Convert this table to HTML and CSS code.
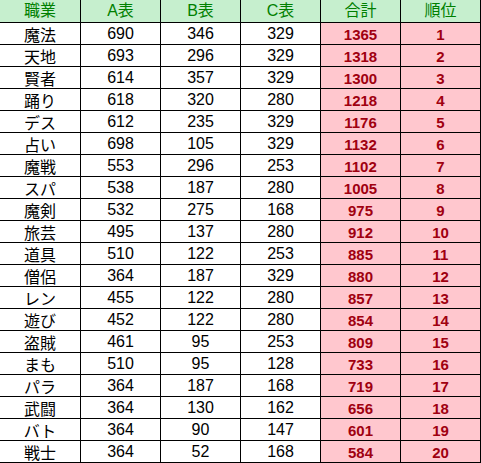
FILE: index.html
```html
<!DOCTYPE html>
<html lang="ja">
<head>
<meta charset="utf-8">
<title>表</title>
<link rel="stylesheet" href="styles.css">
</head>
<body>
<div class="sheet">
  <div class="c h">職業</div><div class="c h">A表</div><div class="c h">B表</div><div class="c h">C表</div><div class="c h">合計</div><div class="c h">順位</div>
  <div class="c jp">魔法</div><div class="c">690</div><div class="c">346</div><div class="c">329</div><div class="c hi">1365</div><div class="c hi">1</div>
  <div class="c jp">天地</div><div class="c">693</div><div class="c">296</div><div class="c">329</div><div class="c hi">1318</div><div class="c hi">2</div>
  <div class="c jp">賢者</div><div class="c">614</div><div class="c">357</div><div class="c">329</div><div class="c hi">1300</div><div class="c hi">3</div>
  <div class="c jp">踊り</div><div class="c">618</div><div class="c">320</div><div class="c">280</div><div class="c hi">1218</div><div class="c hi">4</div>
  <div class="c jp">デス</div><div class="c">612</div><div class="c">235</div><div class="c">329</div><div class="c hi">1176</div><div class="c hi">5</div>
  <div class="c jp">占い</div><div class="c">698</div><div class="c">105</div><div class="c">329</div><div class="c hi">1132</div><div class="c hi">6</div>
  <div class="c jp">魔戦</div><div class="c">553</div><div class="c">296</div><div class="c">253</div><div class="c hi">1102</div><div class="c hi">7</div>
  <div class="c jp">スパ</div><div class="c">538</div><div class="c">187</div><div class="c">280</div><div class="c hi">1005</div><div class="c hi">8</div>
  <div class="c jp">魔剣</div><div class="c">532</div><div class="c">275</div><div class="c">168</div><div class="c hi">975</div><div class="c hi">9</div>
  <div class="c jp">旅芸</div><div class="c">495</div><div class="c">137</div><div class="c">280</div><div class="c hi">912</div><div class="c hi">10</div>
  <div class="c jp">道具</div><div class="c">510</div><div class="c">122</div><div class="c">253</div><div class="c hi">885</div><div class="c hi">11</div>
  <div class="c jp">僧侶</div><div class="c">364</div><div class="c">187</div><div class="c">329</div><div class="c hi">880</div><div class="c hi">12</div>
  <div class="c jp">レン</div><div class="c">455</div><div class="c">122</div><div class="c">280</div><div class="c hi">857</div><div class="c hi">13</div>
  <div class="c jp">遊び</div><div class="c">452</div><div class="c">122</div><div class="c">280</div><div class="c hi">854</div><div class="c hi">14</div>
  <div class="c jp">盗賊</div><div class="c">461</div><div class="c">95</div><div class="c">253</div><div class="c hi">809</div><div class="c hi">15</div>
  <div class="c jp">まも</div><div class="c">510</div><div class="c">95</div><div class="c">128</div><div class="c hi">733</div><div class="c hi">16</div>
  <div class="c jp">パラ</div><div class="c">364</div><div class="c">187</div><div class="c">168</div><div class="c hi">719</div><div class="c hi">17</div>
  <div class="c jp">武闘</div><div class="c">364</div><div class="c">130</div><div class="c">162</div><div class="c hi">656</div><div class="c hi">18</div>
  <div class="c jp">バト</div><div class="c">364</div><div class="c">90</div><div class="c">147</div><div class="c hi">601</div><div class="c hi">19</div>
  <div class="c jp">戦士</div><div class="c">364</div><div class="c">52</div><div class="c">168</div><div class="c hi">584</div><div class="c hi">20</div>
</div>
</body>
</html>
```

FILE: styles.css
```css
html, body {
  margin: 0;
  padding: 0;
  background: #ffffff;
}

.sheet {
  display: grid;
  grid-template-columns: 81px repeat(5, 80px);
  grid-template-rows: 23px repeat(20, 22px);
  width: 481px;
  font-family: "Liberation Sans", "Noto Sans CJK JP", sans-serif;
  font-size: 16px;
  color: #000000;
}

.c {
  box-sizing: border-box;
  display: flex;
  align-items: center;
  justify-content: center;
  padding-top: 1px;
  border-right: 1px solid #000000;
  border-bottom: 1px solid #000000;
  line-height: 1;
  white-space: nowrap;
  overflow: hidden;
}

.jp {
  font-family: "Noto Sans CJK JP", sans-serif;
  font-size: 16px;
}

.h {
  padding-top: 0;
  background: #c6efce;
  color: #008000;
  font-family: "Liberation Sans", "Noto Sans CJK JP", sans-serif;
}

.hi {
  background: #ffc7ce;
  color: #a00010;
  font-weight: bold;
  font-size: 15px;
}
```
